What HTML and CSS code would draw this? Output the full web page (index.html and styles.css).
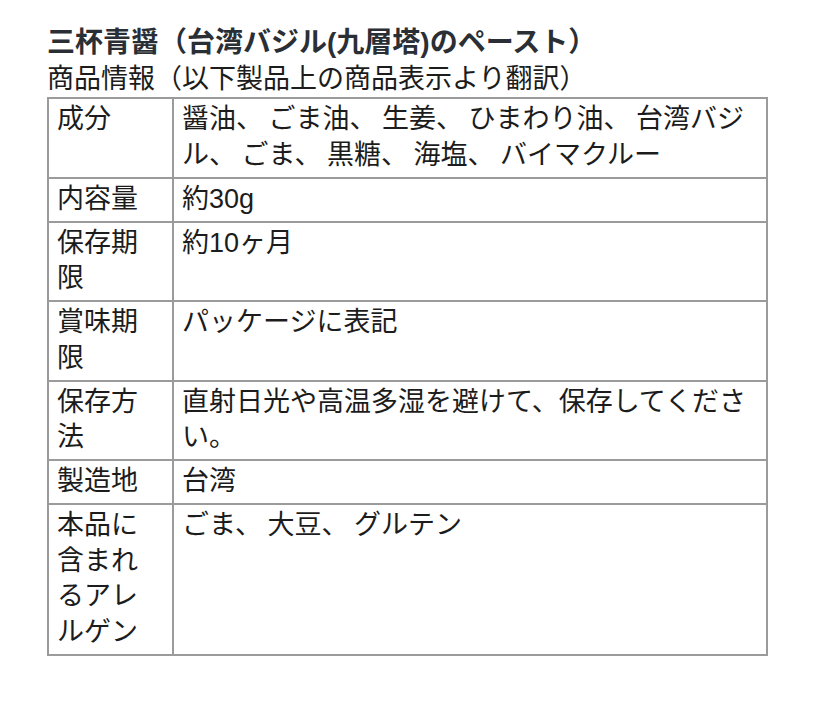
FILE: index.html
```html
<!DOCTYPE html>
<html lang="ja">
<head>
<meta charset="utf-8">
<title>三杯青醤</title>
<link rel="stylesheet" href="styles.css">
</head>
<body>
<div class="page">
  <h1 class="title">三杯青醤（台湾バジル(九層塔)のペースト）</h1>
  <p class="subtitle">商品情報（以下製品上の商品表示より翻訳）</p>
  <table class="info">
    <tr><th>成分</th><td>醤油、 ごま油、 生姜、 ひまわり油、 台湾バジル、 ごま、 黒糖、 海塩、 バイマクルー</td></tr>
    <tr><th>内容量</th><td>約30g</td></tr>
    <tr><th>保存期限</th><td>約10ヶ月</td></tr>
    <tr><th>賞味期限</th><td>パッケージに表記</td></tr>
    <tr><th>保存方法</th><td>直射日光や高温多湿を避けて、保存してください。</td></tr>
    <tr><th>製造地</th><td>台湾</td></tr>
    <tr><th>本品に含まれるアレルゲン</th><td>ごま、 大豆、 グルテン</td></tr>
  </table>
</div>
</body>
</html>
```
FILE: styles.css
```css
html, body {
  margin: 0;
  padding: 0;
  background: #ffffff;
}
body {
  font-family: "Liberation Sans", "Noto Sans CJK JP", sans-serif;
  color: #1c1c1c;
}
.page {
  padding: 25px 0 0 47px;
  width: 721px;
}
.title {
  margin: 0;
  font-size: 28px;
  line-height: 36px;
  font-weight: bold;
  color: #2a2f36;
}
.subtitle {
  margin: 0;
  font-size: 27px;
  line-height: 36px;
}
.info {
  width: 721px;
  border-collapse: collapse;
  border: 2px solid #9b9b9b;
  font-size: 27px;
  line-height: 35.5px;
  table-layout: fixed;
}
.info th, .info td {
  border: 2px solid #9b9b9b;
  padding: 3.25px 8px;
  text-align: left;
  vertical-align: top;
  font-weight: normal;
}
.info td {
  word-spacing: -2px;
}
.info th {
  width: 107px;
}
```
